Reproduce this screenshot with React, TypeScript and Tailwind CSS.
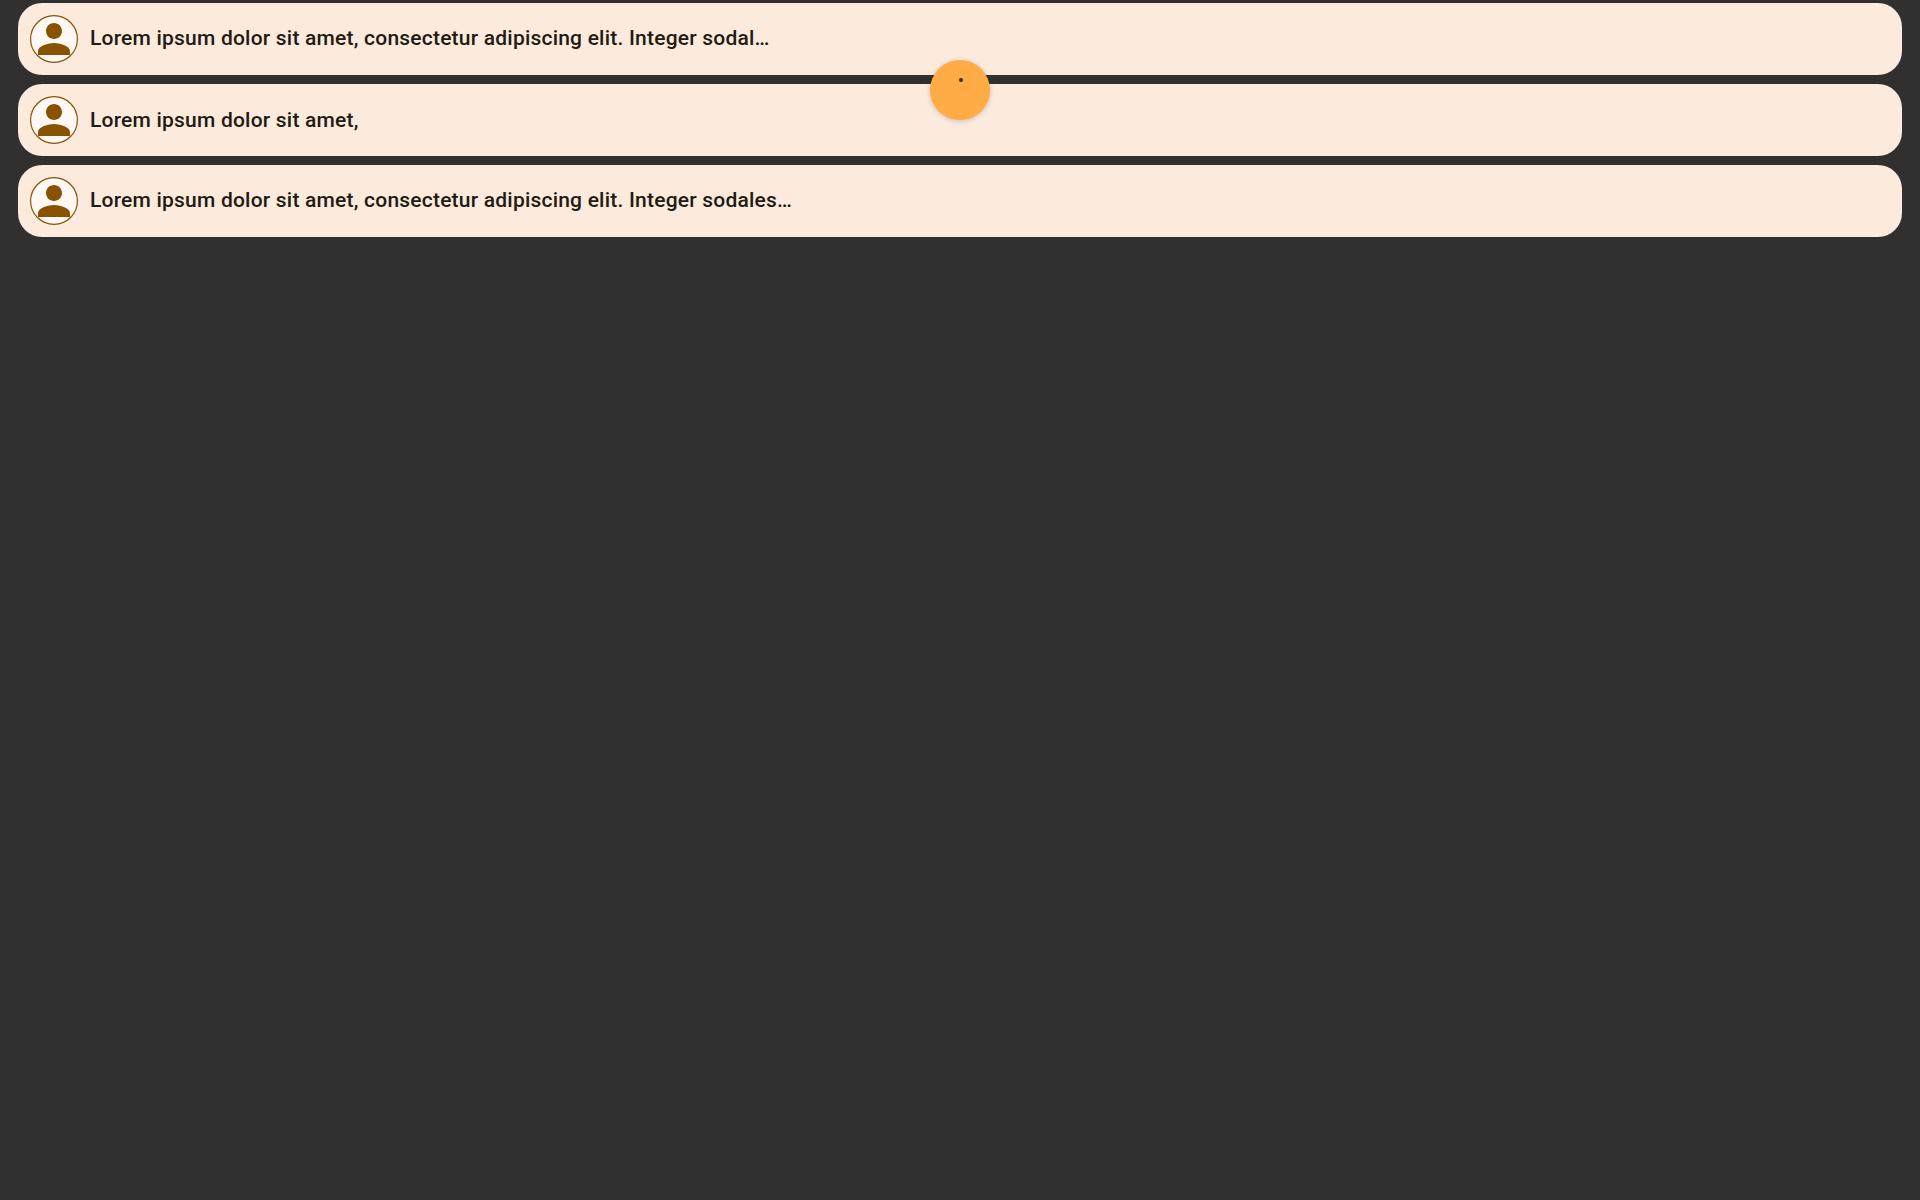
const messages = [
  { id: 1, text: 'Lorem ipsum dolor sit amet, consectetur adipiscing elit. Integer sodal…', shift: 'pb-px' },
  { id: 2, text: 'Lorem ipsum dolor sit amet,', shift: 'pt-px' },
  { id: 3, text: 'Lorem ipsum dolor sit amet, consectetur adipiscing elit. Integer sodales…', shift: 'pb-px' },
];

function Avatar() {
  return (
    <svg viewBox="0 0 48 48" className="size-12 shrink-0" aria-hidden="true">
      <circle cx="24" cy="24" r="23.5" fill="#fff8f5" />
      <path
        d="M24 24c4.42 0 8-3.58 8-8s-3.58-8-8-8-8 3.58-8 8 3.58 8 8 8zm0 4c-5.34 0-16 2.68-16 8v4h32v-4c0-5.32-10.66-8-16-8z"
        fill="#885200"
      />
      <circle cx="24" cy="24" r="23.4" fill="none" stroke="#885200" strokeWidth="1.2" />
    </svg>
  );
}

function MessageCard({ text, shift }: { text: string; shift: string }) {
  return (
    <li className="flex h-[72px] items-center gap-3 rounded-[24px] bg-[#fceadc] px-3">
      <Avatar />
      <span
        className={`whitespace-nowrap font-['Roboto',sans-serif] text-[21px] leading-[29px] font-medium tracking-[0.21px] text-[#211b13] ${shift}`}
      >
        {text}
      </span>
    </li>
  );
}

export default function App() {
  return (
    <main className="relative h-screen overflow-hidden bg-[#303030] px-[18px] pt-[3px]">
      <ul className="flex flex-col gap-[9px]">
        {messages.map((m) => (
          <MessageCard key={m.id} text={m.text} shift={m.shift} />
        ))}
      </ul>
      <button
        type="button"
        aria-label="Refresh"
        className="absolute top-[60px] left-[930px] size-[60px] rounded-full bg-[#ffac46] shadow-[0_1px_5px_rgba(0,0,0,0.2)]"
      >
        <span className="absolute top-[18px] left-[28.5px] size-1 rounded-full bg-[#3a2408]" />
      </button>
    </main>
  );
}
